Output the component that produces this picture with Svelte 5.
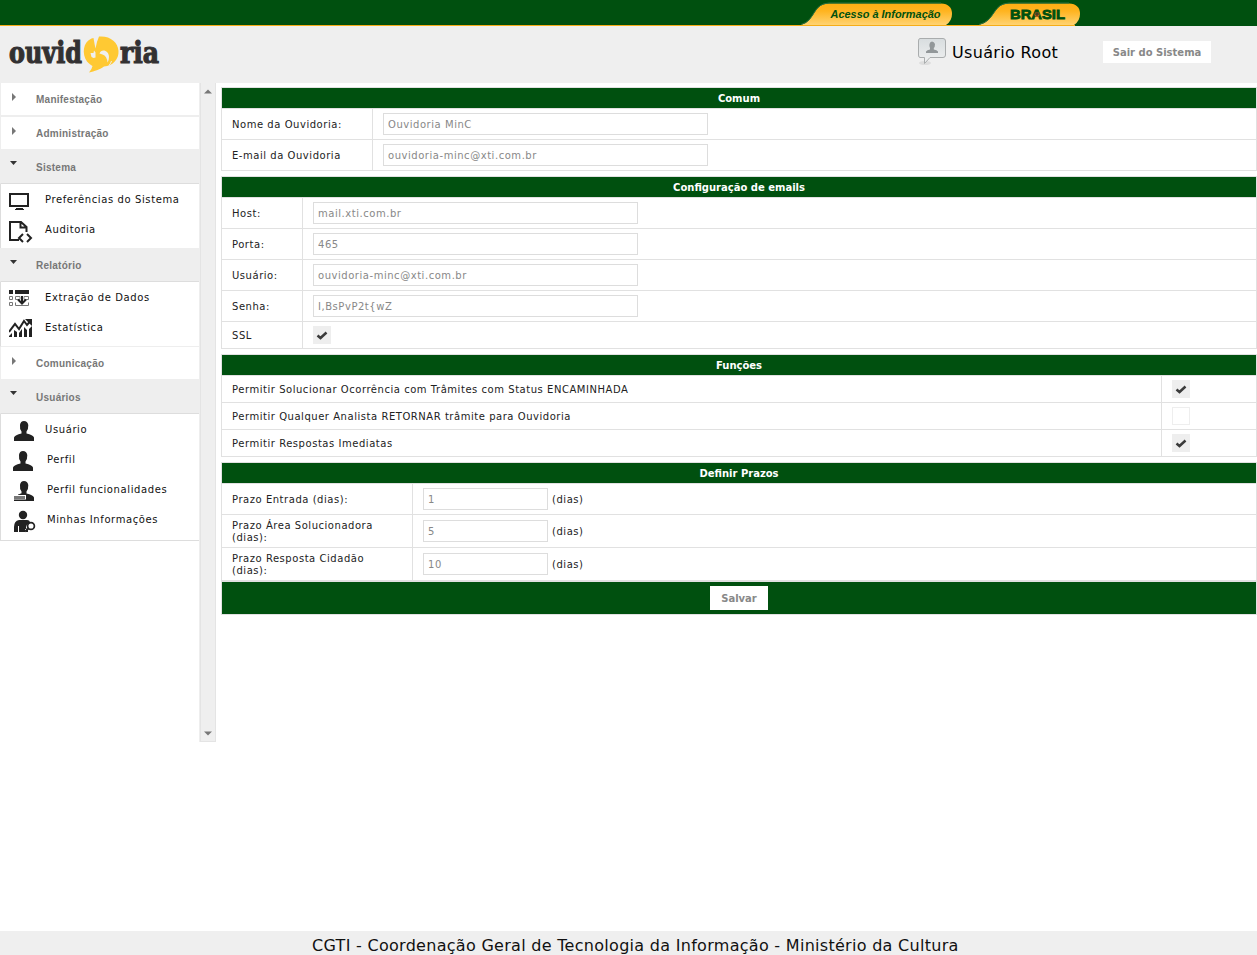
<script>
  const menu = [
    { label: 'Manifestação' },
    { label: 'Administração' },
    { label: 'Sistema', items: [['monitor', 'Preferências do Sistema'], ['audit', 'Auditoria']] },
    { label: 'Relatório', items: [['extract', 'Extração de Dados'], ['chart', 'Estatística']] },
    { label: 'Comunicação' },
    { label: 'Usuários', last: true, items: [['user', 'Usuário'], ['user', 'Perfil', true], ['role', 'Perfil funcionalidades', true], ['info', 'Minhas Informações', true]] }
  ];
  const sections = [
    { title: 'Comum', col: 150, rows: [
      { label: 'Nome da Ouvidoria:', value: 'Ouvidoria MinC' },
      { label: 'E-mail da Ouvidoria', value: 'ouvidoria-minc@xti.com.br' }
    ] },
    { title: 'Configuração de emails', col: 80, rows: [
      { label: 'Host:', value: 'mail.xti.com.br' },
      { label: 'Porta:', value: '465' },
      { label: 'Usuário:', value: 'ouvidoria-minc@xti.com.br' },
      { label: 'Senha:', value: 'I,BsPvP2t{wZ' },
      { label: 'SSL', check: true }
    ] },
    { title: 'Funções', col: 939, rows: [
      { label: 'Permitir Solucionar Ocorrência com Trâmites com Status ENCAMINHADA', check: true },
      { label: 'Permitir Qualquer Analista RETORNAR trâmite para Ouvidoria', check: false },
      { label: 'Permitir Respostas Imediatas', check: true }
    ] },
    { title: 'Definir Prazos', col: 190, rows: [
      { label: 'Prazo Entrada (dias):', value: '1', days: true },
      { label: 'Prazo Área Solucionadora (dias):', value: '5', days: true },
      { label: 'Prazo Resposta Cidadão (dias):', value: '10', days: true }
    ] }
  ];
</script>

<div class="page">
  <div class="topbar">
    <svg width="1257" height="26" viewBox="0 0 1257 26">
      <defs>
        <linearGradient id="tab" x1="0" y1="0" x2="0" y2="1">
          <stop offset="0" stop-color="#ffae12" />
          <stop offset=".35" stop-color="#ffb420" />
          <stop offset="1" stop-color="#ffd373" />
        </linearGradient>
      </defs>
      <path d="M801 25C816 21 812 4 829 3.5H941Q952 4 952 14Q952 21 946 25Z" fill="url(#tab)" />
      <path d="M801 24.5C816 20.500 812 3.500 829 3H941" fill="none" stroke="#2d7040" />
      <path d="M979 25C996 21 992 4 1009 3.500H1069Q1080 4 1080 14Q1080 21 1074 25Z" fill="url(#tab)" />
      <path d="M979 24.500C996 20.500 992 3.500 1009 3H1069" fill="none" stroke="#2d7040" />
      <rect y="25" width="1075" height="1" fill="#f6ad18" />
      <text x="830.500" y="18" class="access" textLength="110" lengthAdjust="spacingAndGlyphs">Acesso à Informação</text>
      <text x="1010" y="19" class="brasil" textLength="55" lengthAdjust="spacingAndGlyphs">BRASIL</text>
      <circle cx="1037" cy="14.500" r="2.500" fill="#c65a15" />
      <path d="M1035 14h4M1037 12v4" stroke="#173b25" />
    </svg>
  </div>

  <header>
    <svg class="logo" width="156" height="46" viewBox="6 30 156 46">
      <g class="word">
        <text x="9" y="62.500" textLength="73" lengthAdjust="spacingAndGlyphs">ouvid</text>
        <text x="120" y="62.500" textLength="39" lengthAdjust="spacingAndGlyphs">ria</text>
      </g>
      <path d="M91.500 38.500C83 42 81.500 54 87 61.500C89 64 91 65 92.500 66Q92 69 89 72.500C95 71 99 70 104 66.500C113 66 119 59 118.500 51C118 42 110 35.500 99 36.500Q96.500 42 95.500 48.500Q94.500 44 93.500 38Z" fill="#ffc933" />
      <path d="M109 65.500Q111 63 111.500 61" fill="none" stroke="#efefef" />
      <path d="M90.500 53h3l.5-2.500 1.500 2v5l-2 .5-2-1Z" fill="#efefef" />
      <path d="M99.500 53.500C101 48.500 109 50 109 57Q109 60 107.500 62.500Q107 56 102.500 54.500Z" fill="#efefef" />
    </svg>
    <div class="account">
      <svg width="30" height="30" viewBox="0 0 30 30">
        <defs><linearGradient id="bubble" x1="0" y1="0" x2="0" y2="1"><stop stop-color="#d8dddf" /><stop offset="1" stop-color="#f0f1f1" /></linearGradient></defs>
        <ellipse cx="8" cy="26" rx="6" ry="2" fill="#ddd" />
        <path d="M3 1.500H26Q28.500 1.500 28.500 4V18Q28.500 20.500 26 20.500H13L7.500 26.500V20.500H3Q1.500 20.500 1.500 18V4Q1.500 1.500 3 1.500Z" fill="url(#bubble)" stroke="#a9acad" />
        <path d="M9 16V14.500Q10 13 13 12.500V11Q12 9.500 12.500 7Q13 4.500 15 4.500T18 7Q18 10 16.800 11V12.500Q20 13 21 14.500V16Z" fill="#929799" />
      </svg>
      <span>Usuário Root</span>
    </div>
    <button class="logout">Sair do Sistema</button>
  </header>

  <main>
    <nav>
      {#each menu as group}
        <div class="group" class:open={group.items} class:compact={group.label === 'Relatório'}>
          <svg class="arrow" width="8" height="8" viewBox="0 0 8 8">
            {#if group.items}<path d="M1 2H8L4.500 6Z" fill="#333" />{:else}<path d="M1 0V8L5 4Z" fill="#777" />{/if}
          </svg>
          <span>{group.label}</span>
        </div>
        {#if group.items}
          <ul class:last={group.last} class:thin={group.label === 'Relatório'}>
            {#each group.items as [icon, text, shifted]}
              <li class:person={group.last} class:shifted>
                <svg width="24" height="24" viewBox="0 0 24 24">
                  {#if icon === 'monitor'}
                    <path d="M1 5H19V17H1Z" fill="none" stroke="#222" stroke-width="2" /><path d="M7 19H14V20H15V21H6V20H7Z" fill="#222" />
                  {:else if icon === 'audit'}
                    <path d="M10 21H1V3H12L17.500 8V13M11.500 3V8.500H17.500" fill="none" stroke="#222" stroke-width="2" /><path d="M14 15L10 19L14 23M18 15L22 19L18 23" fill="none" stroke="#222" stroke-width="2" />
                  {:else if icon === 'extract'}
                    <path d="M0 3H4V7H0ZM6 3H20V7H6Z" fill="#222" /><path d="M.5 9.500H3.500V12.500H.5ZM.5 15.500H3.500V18.500H.5ZM6.500 12.500V9.500H11V12.500ZM15 12.500V9.500H19.500V12.500ZM6.500 15.500V18.500H19.500V15.500" fill="none" stroke="#777" /><path d="M13 9V16M9 12.500L13 16.500L17 12.500" fill="none" stroke="#222" stroke-width="2" />
                  {:else if icon === 'chart'}
                    <path d="M0 15L6 7L10 12L15 4L18 8L21 4.500" fill="none" stroke="#222" stroke-width="2" /><path d="M16 2H23V9ZM0 19L3 16V20H0ZM5 13L8 15V20H5ZM10 16L13 12V20H10ZM15 10L18 13V20H15ZM20 12L23 9V20H20Z" fill="#222" />
                  {:else if icon === 'info'}
                    <circle cx="9" cy="5" r="4.200" fill="#222" /><path d="M0 22V17Q0 11 5 10H13Q16 10 16 13Q12 14 12 18L14 20V22H12V19H11V22H5V16H4V22Z" fill="#222" /><circle cx="17" cy="16" r="3.400" fill="#fff" stroke="#222" stroke-width="1.700" /><path d="M14.500 18.500L11 21.500" stroke="#222" stroke-width="2" />
                  {:else}
                    <path d="M0 21V17.500Q1 15 7.500 13.500V11.500Q5.500 9 6 5Q6.500 1 10 1T14.300 5Q14.500 9 12.500 11.500V13.500Q19 15 20 17.500V21Z" fill="#222" />
                    {#if icon === 'role'}<path d="M0 14H12V19.500H0Z" fill="#fff" /><path d="M4 14.500Q9 13 12 14V15H4Z" fill="#222" /><path d="M0 16H11V19H0Z" fill="#777" />{/if}
                  {/if}
                </svg>
                <span>{text}</span>
              </li>
            {/each}
          </ul>
        {/if}
      {/each}
    </nav>
    <div class="scroll">
      <svg width="8" height="5" viewBox="0 0 8 5"><path d="M0 4.500L4 .5L8 4.500Z" fill="#777" /></svg>
      <svg width="8" height="5" viewBox="0 0 8 5"><path d="M0 .5H8L4 4.500Z" fill="#777" /></svg>
    </div>

    <form>
      {#each sections as section}
        <section style="--col: {section.col}px">
          <h2>{section.title}</h2>
          {#each section.rows as row}
            <div class="row" class:small={row.check !== undefined}>
              <label>{row.label}</label>
              <div class="field">
                {#if row.check !== undefined}
                  <div class="check" class:on={row.check}>
                    {#if row.check}<svg width="18" height="18" viewBox="0 0 18 18"><path d="M4.500 9.500L7.500 12L13.500 6.500" fill="none" stroke="#3b3b3b" stroke-width="2.500" /></svg>{/if}
                  </div>
                {:else}
                  <input class:short={row.days} value={row.value} />
                  {#if row.days}<span>(dias)</span>{/if}
                {/if}
              </div>
            </div>
          {/each}
        </section>
      {/each}
      <div class="actions"><button type="button">Salvar</button></div>
    </form>
  </main>

  <footer>CGTI - Coordenação Geral de Tecnologia da Informação - Ministério da Cultura</footer>
</div>

<style>
  :global(body) { margin: 0; background: #fff; }
  * { box-sizing: border-box; }
  svg { display: block; flex: none; }
  .page { width: 1257px; height: 955px; display: flex; flex-direction: column; overflow: hidden; font: 10px/12px "DejaVu Sans", sans-serif; color: #222; }
  .topbar { height: 26px; background: #00500f; }
  .access { font: italic bold 11px "Liberation Sans", sans-serif; fill: #00500f; }
  .brasil { font: bold 13px "Liberation Sans", sans-serif; fill: #00500f; stroke: #00500f; stroke-width: .8px; }
  header { height: 57px; flex: none; background: #efefef; display: flex; align-items: flex-start; }
  .logo { margin: 4px 0 0 6px; }
  .word { font: bold 29.5px "DejaVu Serif", serif; fill: #333132; stroke: #333132; stroke-width: 1.2px; }
  .account { display: flex; margin: 11px 0 0 755px; color: #000; font-size: 16px; line-height: 31px; letter-spacing: .33px; }
  .account span { width: 106px; margin-left: 5px; white-space: nowrap; }
  .logout { margin: 15px 0 0 45px; width: 108px; height: 22px; }
  button { border: 0; padding: 0; background: #fff; color: #888; font: bold 10px "DejaVu Sans", sans-serif; white-space: nowrap; }
  main { height: 659px; display: flex; flex: none; }
  nav { width: 200px; flex: none; border-right: 1px solid #eee; }
  .group { height: 34px; display: flex; padding-left: 10px; border-left: 1px solid #eee; border-bottom: 2px solid #eee; color: #777; font: bold 10px/33px "Liberation Sans", sans-serif; letter-spacing: .25px; }
  .group span { margin-left: 17px; }
  .arrow { margin-top: 10px; }
  .group.open { height: 35px; margin-top: -2px; background: #eee; border-bottom: 1px solid #ddd; padding-left: 8px; line-height: 37px; }
  .group.open.compact { height: 34px; line-height: 35px; }
  .group.open span { margin-left: 19px; }
  ul { list-style: none; margin: 0; padding: 0; height: 66px; border-left: 1px solid #ddd; border-bottom: 2px solid #eee; }
  ul.thin { height: 65px; border-bottom-width: 1px; }
  ul.last { height: 127px; border-bottom: 1px solid #ddd; }
  li { height: 30px; display: flex; align-items: flex-start; padding: 5px 0 0 8px; color: #111; letter-spacing: .6px; }
  li span { margin-left: 12px; line-height: 22px; white-space: nowrap; }
  li.person { padding-left: 13px; }
  li.person span { margin-left: 7px; }
  li.shifted { padding-left: 12px; }
  li.shifted span { margin-left: 10px; }
  li.shifted:nth-child(n+3) { padding-left: 13px; }
  li.shifted:nth-child(n+3) span { margin-left: 9px; }
  li.person svg { position: relative; top: 1px; }
  .scroll { width: 16px; flex: none; background: #efefef; border: 1px solid #e4e4e4; border-top: 0; display: flex; flex-direction: column; justify-content: space-between; align-items: center; padding: 6px 0 5px; }
  form { width: 1036px; margin: 4px 0 0 5px; letter-spacing: .54px; }
  section { border: 1px solid #e1e1e1; border-bottom: 0; margin-bottom: 5px; }
  section:nth-last-child(2) { margin-bottom: 0; }
  h2 { height: 21px; margin: 0; border-bottom: 1px solid #e1e1e1; background: #00500f; color: #fff; text-align: center; font: bold 10px/21px "DejaVu Sans", sans-serif; letter-spacing: 0; }
  .row { min-height: 31px; display: grid; grid-template-columns: calc(var(--col) + 1px) 1fr; border-bottom: 1px solid #e1e1e1; }
  .row.small { min-height: 27px; }
  label { display: flex; align-items: center; padding: 5px 10px 3px; border-right: 1px solid #e1e1e1; }
  section:nth-child(4) label { padding-right: 20px; }
  .field { display: flex; align-items: center; padding-left: 10px; }
  .field span { padding-top: 2px; }
  input { width: 325px; height: 22px; border: 1px solid #ddd; padding: 0 4px; margin: 0; font: 10px "DejaVu Sans", sans-serif; letter-spacing: .54px; color: #888; background: #fff; outline: 0; }
  input.short { width: 125px; margin-right: 4px; }
  .check { width: 18px; height: 18px; border: 1px solid #eee; }
  .check.on { border: 0; background: #eee; }
  .actions { height: 34px; border: 1px solid #e1e1e1; background: #00500f; display: flex; justify-content: center; align-items: center; }
  .actions button { width: 58px; height: 24px; }
  footer { margin-top: auto; height: 24px; flex: none; background: #efefef; color: #111; font-size: 16px; line-height: 29px; letter-spacing: .29px; padding-left: 312px; white-space: nowrap; }
</style>
